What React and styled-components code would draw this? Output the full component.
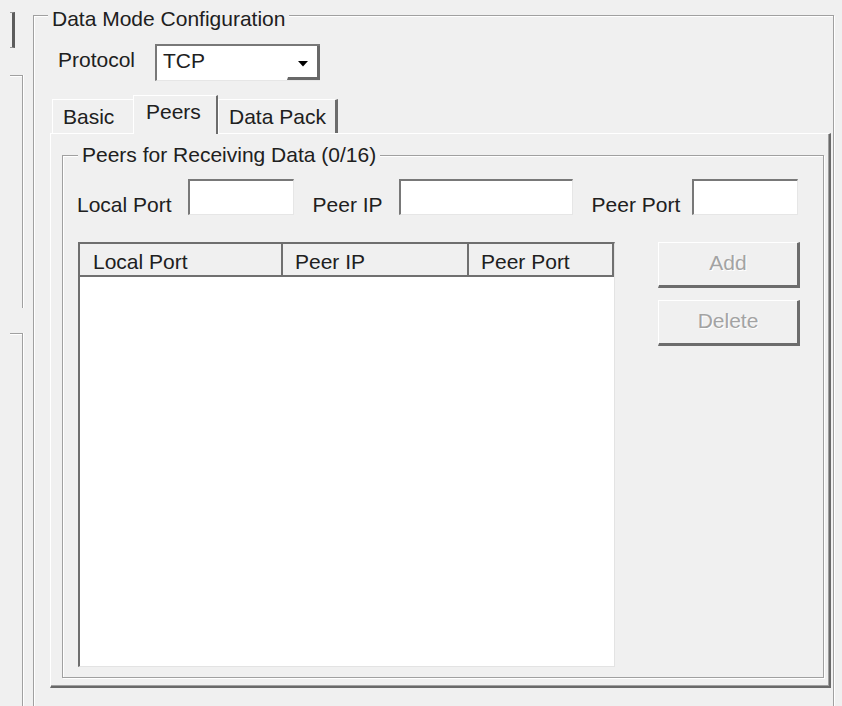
import React from 'react';
import styled, { createGlobalStyle } from 'styled-components';

const GlobalStyle = createGlobalStyle`
  html, body {
    margin: 0;
    padding: 0;
    background: #f0f0f0;
  }
  body {
    font-family: "Liberation Sans", Arial, sans-serif;
    font-size: 21px;
    color: #202020;
  }
  * {
    box-sizing: border-box;
  }
`;

const Page = styled.div`
  display: flex;
  align-items: flex-start;
  width: 842px;
  height: 706px;
  overflow: hidden;
  background: #f0f0f0;
`;

/* strip of the neighbouring panel, cut off at the left edge */
const SideStrip = styled.div`
  display: flex;
  flex-direction: column;
  flex-shrink: 0;
  width: 23px;
  height: 100%;
`;

const SideBracket = styled.div`
  width: 5px;
  height: 36px;
  margin: 12px 0 0 10px;
  border-top: 1px solid #9a9a9a;
  border-bottom: 1px solid #9a9a9a;
  border-right: 3px solid #5c5c5c;
`;

const SidePanel = styled.div`
  width: 13px;
  margin: ${(p) => p.$top}px 0 0 10px;
  border-top: 1px solid #a0a0a0;
  border-right: 1px solid #a0a0a0;
  box-shadow: inset 0 1px 0 #fff, 1px 0 0 #fff;
  ${(p) => (p.$grow ? 'flex: 1;' : `height: ${p.$h}px;`)}
`;

/* etched group box */
const GroupFrame = styled.div`
  display: flex;
  flex-direction: column;
  border: 1px solid #a0a0a0;
  box-shadow: inset 1px 1px 0 #fff, 1px 1px 0 #fff;
`;

const MainGroup = styled(GroupFrame)`
  flex-shrink: 0;
  width: 801px;
  height: 740px;
  margin: 15px 0 0 10px;
`;

const InnerGroup = styled(GroupFrame)`
  flex: 1;
`;

const GroupTitle = styled.div`
  align-self: flex-start;
  margin: ${(p) => p.$top}px 0 0 ${(p) => p.$left}px;
  padding: 0 4px;
  line-height: 24px;
  white-space: nowrap;
  background: #f0f0f0;
`;

const ProtocolRow = styled.div`
  display: flex;
  align-items: flex-start;
  margin: 13px 0 0 24px;
`;

const FieldLabel = styled.span`
  margin: ${(p) => p.$dy}px ${(p) => p.$gap}px 0 0;
  line-height: 24px;
  white-space: nowrap;
`;

const Combo = styled.div`
  display: flex;
  width: 165px;
  height: 37px;
  background: #fff;
  border-top: 2px solid #787878;
  border-left: 2px solid #787878;
  border-bottom: 1px solid #e6e6e6;
`;

const ComboText = styled.div`
  flex: 1;
  padding: 3px 0 0 6px;
  line-height: 24px;
`;

const DropButton = styled.div`
  display: flex;
  align-items: center;
  justify-content: center;
  width: 33px;
  padding-top: 4px;
  background: #fff;
  border-left: 1px solid #fff;
  border-right: 3px solid #686868;
  border-bottom: 3px solid #686868;
`;

const TabStrip = styled.div`
  display: flex;
  align-items: flex-end;
  margin: 14px 0 0 18px;
`;

const Tab = styled.div`
  width: ${(p) => p.$w}px;
  height: ${(p) => (p.$active ? 39 : 34)}px;
  margin-bottom: ${(p) => (p.$active ? 0 : 1)}px;
  padding: ${(p) => (p.$active ? 4 : 5)}px 0 0 ${(p) => (p.$active ? 12 : 10)}px;
  line-height: 24px;
  white-space: nowrap;
  background: #f0f0f0;
  border-top: 1px solid #fff;
  border-left: 1px solid #fff;
  border-right: ${(p) => (p.$edge ? `${p.$edge}px solid #6c6c6c` : 'none')};
  ${(p) => p.$active && 'position: relative; z-index: 1;'}
`;

const TabPanel = styled.div`
  display: flex;
  flex-direction: column;
  height: 555px;
  margin: -1px 2px 0 16px;
  padding: 21px 5px 8px 11px;
  border-top: 1px solid #fff;
  border-left: 1px solid #fff;
  border-right: 2px solid #696969;
  border-bottom: 2px solid #696969;
  box-shadow: inset -1px -1px 0 #a0a0a0;
`;

const FieldRow = styled.div`
  display: flex;
  align-items: flex-start;
  margin: 12px 0 0 14px;
`;

const Edit = styled.div`
  width: ${(p) => p.$w}px;
  height: 36px;
  margin-right: ${(p) => p.$gap || 0}px;
  background: #fff;
  border-top: 2px solid #787878;
  border-left: 2px solid #787878;
  border-right: 1px solid #e6e6e6;
  border-bottom: 1px solid #e6e6e6;
`;

const ListRow = styled.div`
  display: flex;
  align-items: flex-start;
  margin: 25px 0 0 15px;
`;

const ListView = styled.div`
  display: flex;
  flex-direction: column;
  width: 537px;
  height: 425px;
  background: #fff;
  border-top: 2px solid #6e6e6e;
  border-left: 2px solid #6e6e6e;
  border-right: 1px solid #e3e3e3;
  border-bottom: 1px solid #e3e3e3;
`;

const ListHeader = styled.div`
  display: flex;
  height: 33px;
  background: #f0f0f0;
`;

const HeaderCell = styled.div`
  ${(p) => (p.$w ? `width: ${p.$w}px;` : 'flex: 1;')}
  padding: 6px 0 0 ${(p) => p.$pad}px;
  line-height: 24px;
  white-space: nowrap;
  border-right: 2px solid #707070;
  border-bottom: 2px solid #707070;
`;

const ListBody = styled.div`
  flex: 1;
  background: #fff;
`;

const ButtonColumn = styled.div`
  display: flex;
  flex-direction: column;
  gap: 12px;
  margin-left: 43px;
`;

const PushButton = styled.button`
  width: 142px;
  height: 46px;
  padding: 0 0 3px;
  font: inherit;
  line-height: 24px;
  color: #a3a3a3;
  text-shadow: 1px 1px 0 #fff;
  background: #f0f0f0;
  border: none;
  border-top: 1px solid #fff;
  border-left: 1px solid #fff;
  border-right: 3px solid #6c6c6c;
  border-bottom: 3px solid #6c6c6c;
`;

const DownArrow = () => (
  <svg width="10" height="6" viewBox="0 0 10 6">
    <polygon points="0,0 10,0 5,5.5" fill="#000" />
  </svg>
);

const tabs = [
  { label: 'Basic', w: 81 },
  { label: 'Peers', w: 85, active: true, edge: 2 },
  { label: 'Data Pack', w: 120, edge: 3 },
];

const columns = [
  { label: 'Local Port', w: 203, pad: 13 },
  { label: 'Peer IP', w: 186, pad: 12 },
  { label: 'Peer Port', pad: 12 },
];

export default function App() {
  return (
    <>
      <GlobalStyle />
      <Page>
        <SideStrip>
          <SideBracket />
          <SidePanel $top={27} $h={233} />
          <SidePanel $top={25} $grow />
        </SideStrip>

        <MainGroup>
          <GroupTitle $top={-9} $left={14}>Data Mode Configuration</GroupTitle>

          <ProtocolRow>
            <FieldLabel $dy={4} $gap={20}>Protocol</FieldLabel>
            <Combo>
              <ComboText>TCP</ComboText>
              <DropButton>
                <DownArrow />
              </DropButton>
            </Combo>
          </ProtocolRow>

          <TabStrip>
            {tabs.map((t) => (
              <Tab key={t.label} $w={t.w} $active={t.active} $edge={t.edge}>
                {t.label}
              </Tab>
            ))}
          </TabStrip>

          <TabPanel>
            <InnerGroup>
              <GroupTitle $top={-13} $left={15}>Peers for Receiving Data (0/16)</GroupTitle>

              <FieldRow>
                <FieldLabel $dy={14} $gap={16}>Local Port</FieldLabel>
                <Edit $w={106} $gap={19} />
                <FieldLabel $dy={14} $gap={16}>Peer IP</FieldLabel>
                <Edit $w={174} $gap={19} />
                <FieldLabel $dy={14} $gap={12}>Peer Port</FieldLabel>
                <Edit $w={106} />
              </FieldRow>

              <ListRow>
                <ListView>
                  <ListHeader>
                    {columns.map((c) => (
                      <HeaderCell key={c.label} $w={c.w} $pad={c.pad}>
                        {c.label}
                      </HeaderCell>
                    ))}
                  </ListHeader>
                  <ListBody />
                </ListView>
                <ButtonColumn>
                  <PushButton disabled>Add</PushButton>
                  <PushButton disabled>Delete</PushButton>
                </ButtonColumn>
              </ListRow>
            </InnerGroup>
          </TabPanel>
        </MainGroup>
      </Page>
    </>
  );
}
